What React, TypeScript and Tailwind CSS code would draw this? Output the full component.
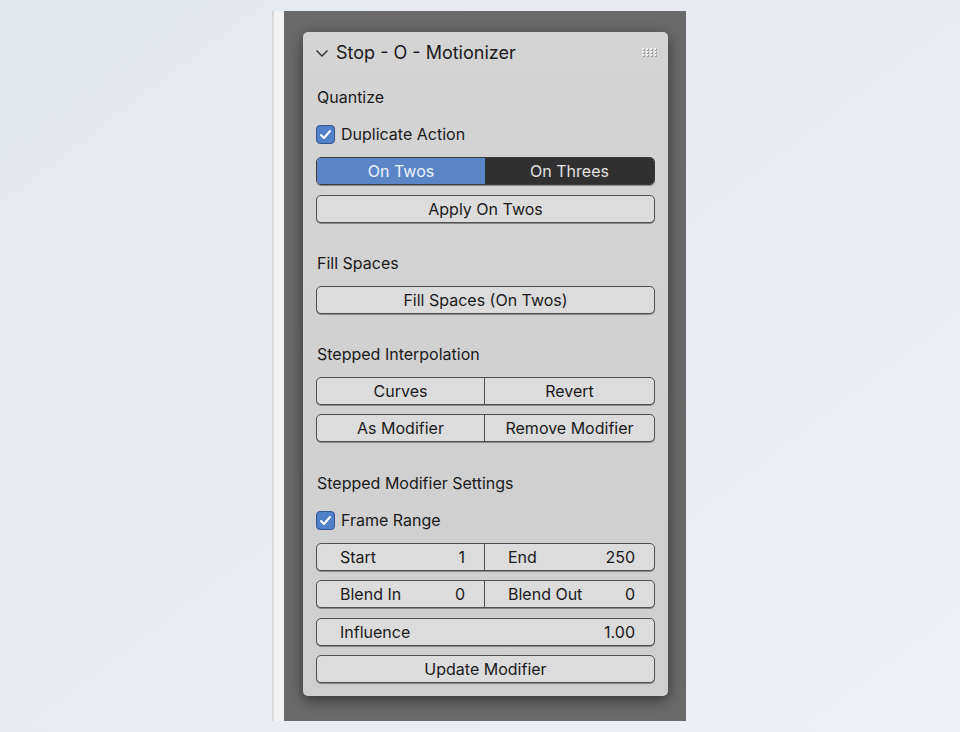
import React from "react";

const font = { fontFamily: "Inter, 'Noto Sans', sans-serif" };

function Check() {
  return (
    <div className="w-[19px] h-[19px] rounded-[4px] bg-[#5080c8] border border-[#34568c] flex items-center justify-center">
      <svg width="13" height="13" viewBox="0 0 13 13">
        <polyline points="2,7 5,10 11,3" fill="none" stroke="#ffffff" strokeWidth="2" strokeLinecap="round" strokeLinejoin="round" />
      </svg>
    </div>
  );
}

function Label({ text, className = "" }: { text: string; className?: string }) {
  return <div className={`h-[28px] flex items-center pl-[1px] text-[16px] text-[#1a1a1a] ${className}`}>{text}</div>;
}

function CheckRow({ text, className = "" }: { text: string; className?: string }) {
  return (
    <div className={`h-[28px] flex items-center gap-[6px] text-[16px] text-[#1a1a1a] ${className}`}>
      <Check />
      <span>{text}</span>
    </div>
  );
}

function Button({ text, className = "" }: { text: string; className?: string }) {
  return (
    <div className={`h-[28px] rounded-[5px] border border-[#505050] bg-[#dcdcdc] shadow-[0_1px_0_rgba(0,0,0,0.35)] flex items-center justify-center text-[16px] text-[#1a1a1a] ${className}`}>
      {text}
    </div>
  );
}

function Pair({ left, right, className = "" }: { left: React.ReactNode; right: React.ReactNode; className?: string }) {
  return (
    <div className={`h-[28px] rounded-[5px] border border-[#505050] bg-[#dcdcdc] shadow-[0_1px_0_rgba(0,0,0,0.35)] flex overflow-hidden text-[16px] text-[#1a1a1a] ${className}`}>
      <div className="w-[168px] flex items-center border-r border-[#505050]">{left}</div>
      <div className="flex-1 flex items-center">{right}</div>
    </div>
  );
}

function Field({ label, value }: { label: string; value: string }) {
  return (
    <div className="w-full flex items-center justify-between pl-[23px] pr-[19px]">
      <span>{label}</span>
      <span>{value}</span>
    </div>
  );
}

export default function App() {
  return (
    <div className="w-[960px] h-[732px] bg-gradient-to-br from-[#e4e8ef] to-[#eef0f5] pt-[11px] pl-[272px]" style={font}>
      <div className="w-[414px] h-[710px] flex">
        <div className="w-[12px] bg-[#f3f3f3] border-l-2 border-[#d9d9d9]" />
        <div className="flex-1 bg-[#6a6a6a] pl-[19px] pt-[21px]">
          <div className="w-[365px] h-[664px] rounded-[5px] bg-gradient-to-b from-[#d4d4d4] to-[#cfcfcf] shadow-[0_4px_14px_rgba(0,0,0,0.5)] px-[13px] pb-[13px]">
            {/* header */}
            <div className="h-[40px] flex items-center">
              <svg width="14" height="10" viewBox="0 0 14 10" className="ml-[-1px] mt-[1px]">
                <polyline points="1.5,2.5 7,8 12.5,2.5" fill="none" stroke="#2a2a2a" strokeWidth="1.3" />
              </svg>
              <span className="ml-[7px] text-[18px] text-[#1a1a1a]">Stop - O - Motionizer</span>
              <div className="ml-auto mr-[-1px] grid grid-cols-4 gap-x-[2px] gap-y-[1px]">
                {Array.from({ length: 12 }).map((_, i) => (
                  <div key={i} className="w-[2px] h-[2px] bg-[#eeeeee] shadow-[1px_1px_0_#a0a0a0]" />
                ))}
              </div>
            </div>

            {/* Quantize */}
            <Label text="Quantize" className="mt-[11px]" />
            <CheckRow text="Duplicate Action" className="mt-[9px]" />
            <div className="mt-[9px] h-[28px] rounded-[5px] border border-[#3a3a3a] flex overflow-hidden text-[16px] shadow-[0_1px_0_rgba(0,0,0,0.35)]">
              <div className="w-[168px] bg-[#5a86c8] text-[#eef3fb] flex items-center justify-center">On Twos</div>
              <div className="flex-1 bg-[#303030] text-[#e2e2e2] flex items-center justify-center">On Threes</div>
            </div>
            <Button text="Apply On Twos" className="mt-[10px]" />

            {/* Fill Spaces */}
            <Label text="Fill Spaces" className="mt-[26px]" />
            <Button text="Fill Spaces (On Twos)" className="mt-[9px]" />

            {/* Stepped Interpolation */}
            <Label text="Stepped Interpolation" className="mt-[26px]" />
            <Pair
              className="mt-[9px]"
              left={<div className="w-full text-center">Curves</div>}
              right={<div className="w-full text-center">Revert</div>}
            />
            <Pair
              className="mt-[9px]"
              left={<div className="w-full text-center">As Modifier</div>}
              right={<div className="w-full text-center">Remove Modifier</div>}
            />

            {/* Stepped Modifier Settings */}
            <Label text="Stepped Modifier Settings" className="mt-[27px]" />
            <CheckRow text="Frame Range" className="mt-[9px]" />
            <Pair className="mt-[9px]" left={<Field label="Start" value="1" />} right={<Field label="End" value="250" />} />
            <Pair className="mt-[9px]" left={<Field label="Blend In" value="0" />} right={<Field label="Blend Out" value="0" />} />
            <div className="mt-[10px] h-[28px] rounded-[5px] border border-[#505050] bg-[#dcdcdc] shadow-[0_1px_0_rgba(0,0,0,0.35)] flex items-center text-[16px] text-[#1a1a1a]">
              <Field label="Influence" value="1.00" />
            </div>
            <Button text="Update Modifier" className="mt-[9px]" />
          </div>
        </div>
      </div>
    </div>
  );
}
